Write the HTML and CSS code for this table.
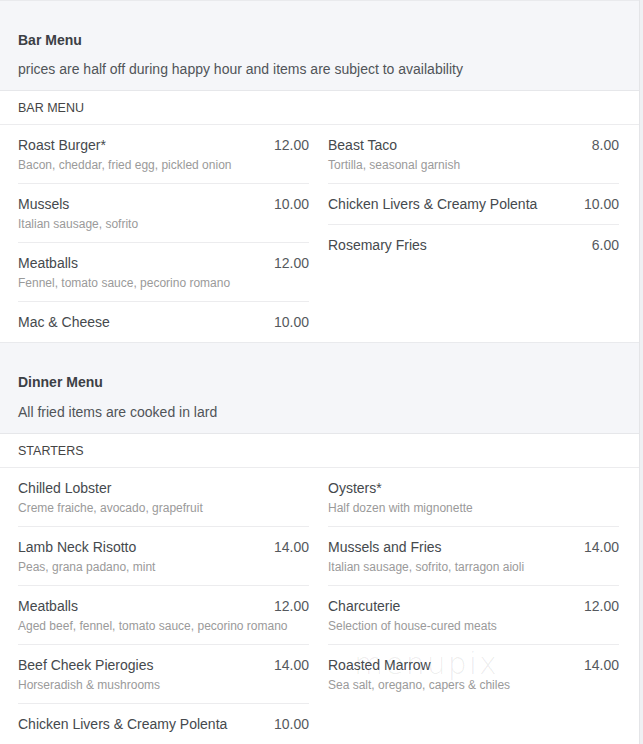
FILE: index.html
```html
<!DOCTYPE html>
<html>
<head>
<meta charset="utf-8">
<link rel="stylesheet" href="styles.css">
</head>
<body>
<div class="page">
  <section class="menu">
    <header class="menu-head">
      <h2 class="menu-title">Bar Menu</h2>
      <p class="menu-note">prices are half off during happy hour and items are subject to availability</p>
    </header>
    <div class="group-label">BAR MENU</div>
    <div class="items">
      <div class="col">
        <div class="item"><div class="row"><span class="name">Roast Burger*</span><span class="price">12.00</span></div><div class="desc">Bacon, cheddar, fried egg, pickled onion</div></div>
        <div class="item"><div class="row"><span class="name">Mussels</span><span class="price">10.00</span></div><div class="desc">Italian sausage, sofrito</div></div>
        <div class="item"><div class="row"><span class="name">Meatballs</span><span class="price">12.00</span></div><div class="desc">Fennel, tomato sauce, pecorino romano</div></div>
        <div class="item"><div class="row"><span class="name">Mac &amp; Cheese</span><span class="price">10.00</span></div></div>
      </div>
      <div class="col">
        <div class="item"><div class="row"><span class="name">Beast Taco</span><span class="price">8.00</span></div><div class="desc">Tortilla, seasonal garnish</div></div>
        <div class="item"><div class="row"><span class="name">Chicken Livers &amp; Creamy Polenta</span><span class="price">10.00</span></div></div>
        <div class="item"><div class="row"><span class="name">Rosemary Fries</span><span class="price">6.00</span></div></div>
      </div>
    </div>
  </section>
  <section class="menu">
    <header class="menu-head">
      <h2 class="menu-title">Dinner Menu</h2>
      <p class="menu-note">All fried items are cooked in lard</p>
    </header>
    <div class="group-label">STARTERS</div>
    <div class="items">
      <div class="col">
        <div class="item"><div class="row"><span class="name">Chilled Lobster</span><span class="price"></span></div><div class="desc">Creme fraiche, avocado, grapefruit</div></div>
        <div class="item"><div class="row"><span class="name">Lamb Neck Risotto</span><span class="price">14.00</span></div><div class="desc">Peas, grana padano, mint</div></div>
        <div class="item"><div class="row"><span class="name">Meatballs</span><span class="price">12.00</span></div><div class="desc">Aged beef, fennel, tomato sauce, pecorino romano</div></div>
        <div class="item"><div class="row"><span class="name">Beef Cheek Pierogies</span><span class="price">14.00</span></div><div class="desc">Horseradish &amp; mushrooms</div></div>
        <div class="item"><div class="row"><span class="name">Chicken Livers &amp; Creamy Polenta</span><span class="price">10.00</span></div></div>
      </div>
      <div class="col">
        <div class="item"><div class="row"><span class="name">Oysters*</span><span class="price"></span></div><div class="desc">Half dozen with mignonette</div></div>
        <div class="item"><div class="row"><span class="name">Mussels and Fries</span><span class="price">14.00</span></div><div class="desc">Italian sausage, sofrito, tarragon aioli</div></div>
        <div class="item"><div class="row"><span class="name">Charcuterie</span><span class="price">12.00</span></div><div class="desc">Selection of house-cured meats</div></div>
        <div class="item"><div class="row"><span class="name">Roasted Marrow</span><span class="price">14.00</span></div><div class="desc">Sea salt, oregano, capers &amp; chiles</div></div>
      </div>
    </div>
  </section>
  <div class="watermark">menupix</div>
</div>
</body>
</html>
```
FILE: styles.css
```css
html, body {
  margin: 0;
  padding: 0;
}
body {
  background: #eff0f3;
  font-family: "Liberation Sans", Arial, sans-serif;
  color: #444;
}
.page {
  position: relative;
  width: 639px;
  background: #fff;
  border-right: 1px solid #e4e5e8;
  min-height: 744px;
  overflow: hidden;
}
.menu-head {
  background: #f5f6f9;
  border-top: 1px solid #e9eaed;
  border-bottom: 1px solid #e6e7ea;
  padding: 29px 18px 11px;
}
.menu-title {
  margin: 0 0 9px;
  font-size: 14px;
  line-height: 20px;
  font-weight: bold;
  color: #3c4045;
}
.menu + .menu .menu-title {
  margin-bottom: 10px;
}
.menu-note {
  margin: 0;
  font-size: 14px;
  line-height: 20px;
  color: #505458;
}
.group-label {
  padding: 9px 18px 7px;
  font-size: 12.5px;
  line-height: 17px;
  color: #444;
  border-bottom: 1px solid #ececee;
}
.items {
  display: grid;
  grid-template-columns: 291px 291px;
  column-gap: 19px;
  padding: 0 20px 0 18px;
}
.item {
  padding: 10px 0 9px;
  border-bottom: 1px solid #ececee;
}
.col .item:last-child {
  border-bottom: none;
}
.row {
  display: flex;
  justify-content: space-between;
  font-size: 14px;
  line-height: 21px;
}
.name {
  color: #45494d;
}
.price {
  color: #55595d;
}
.desc {
  font-size: 12px;
  line-height: 18px;
  color: #9a9a9a;
}
.watermark {
  position: absolute;
  left: 354px;
  top: 646px;
  font-family: "DejaVu Sans", sans-serif;
  font-weight: 200;
  font-size: 30px;
  letter-spacing: 2px;
  color: rgba(0, 0, 0, 0.08);
  pointer-events: none;
}
```
